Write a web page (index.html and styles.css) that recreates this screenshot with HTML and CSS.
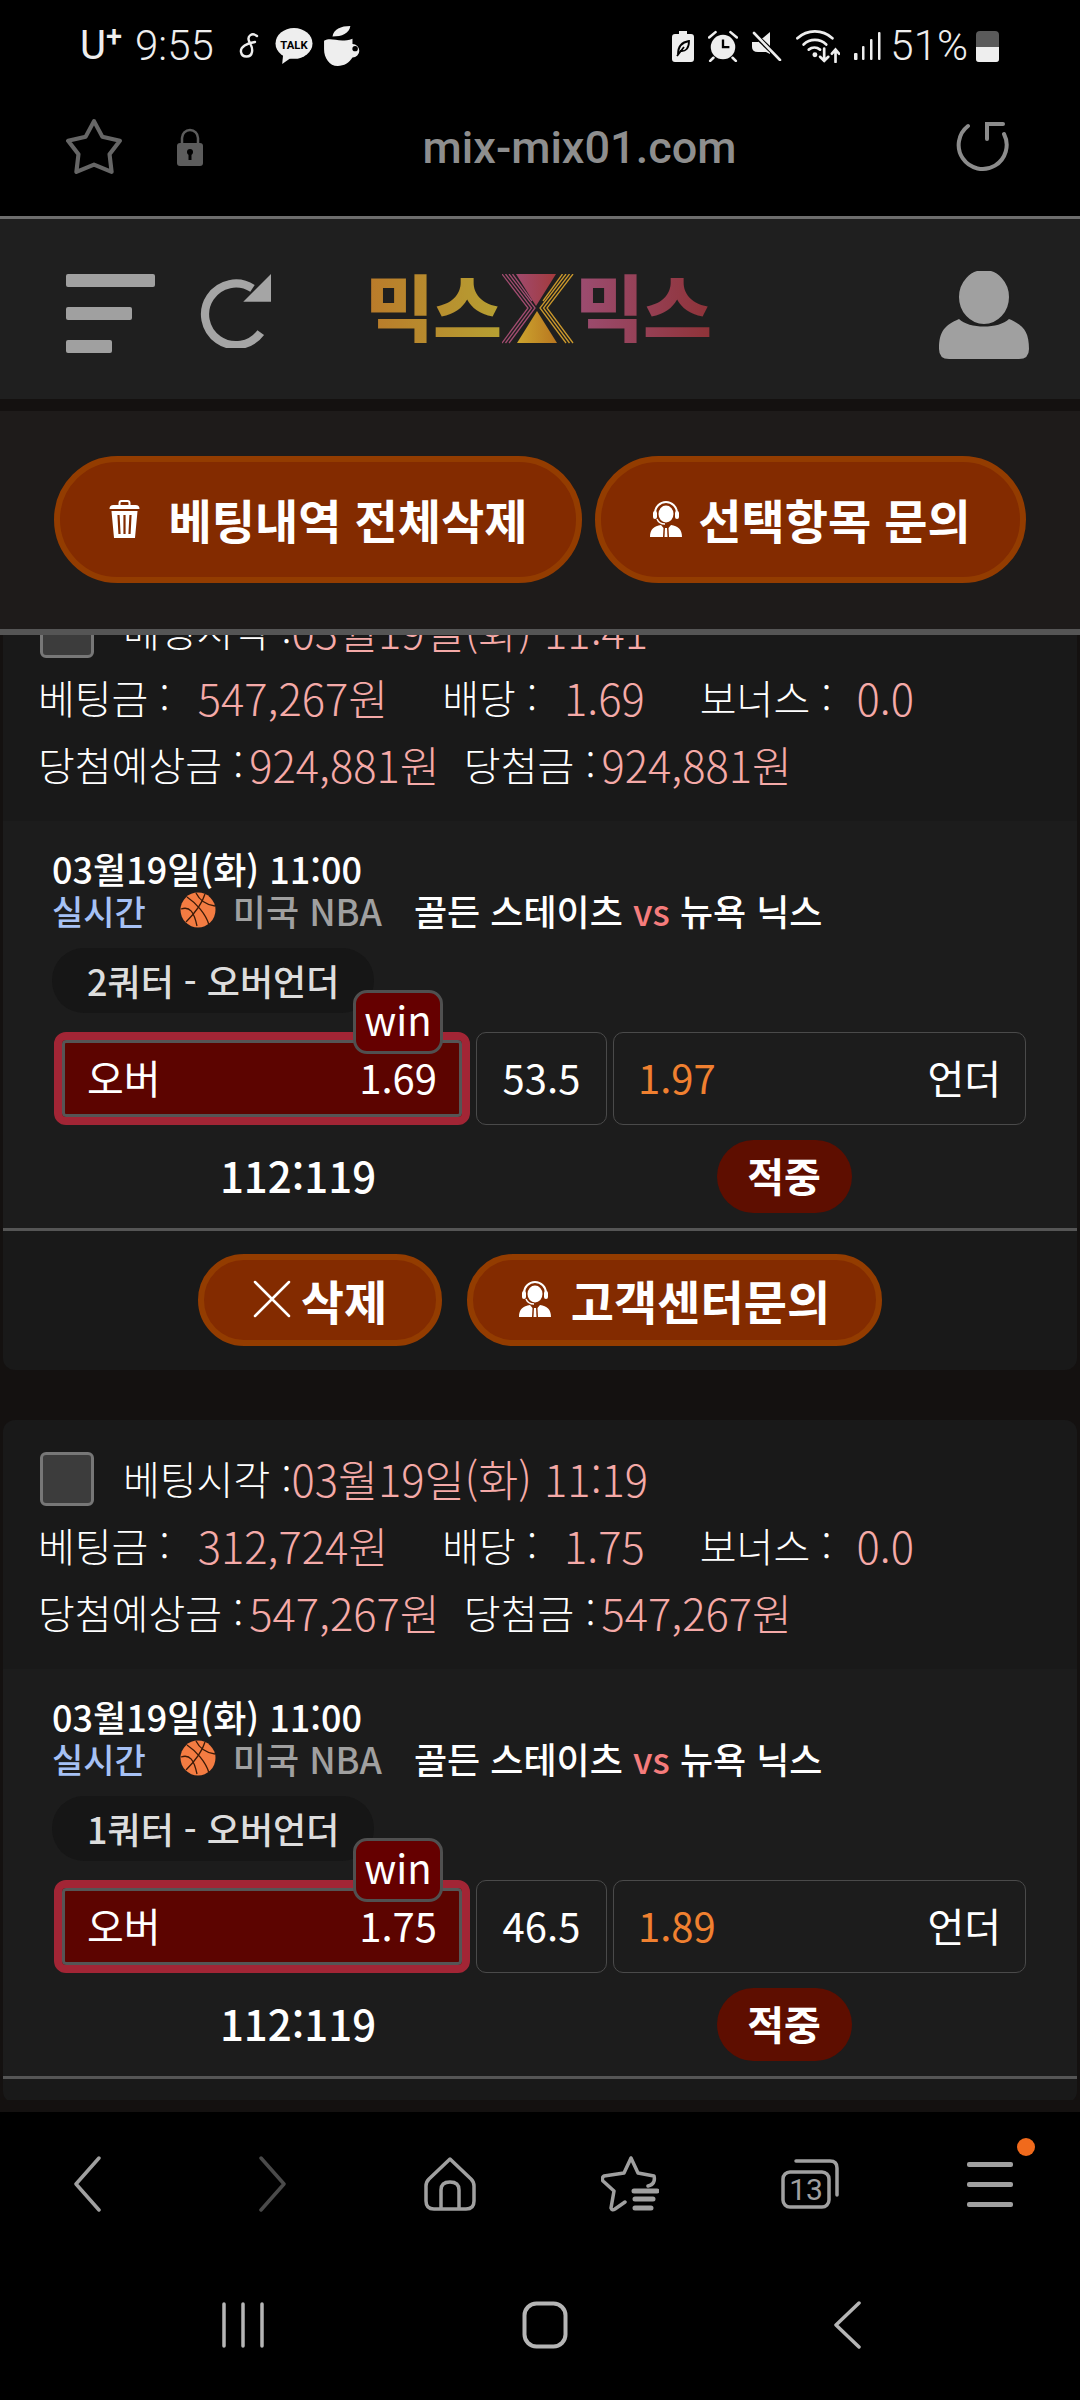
FILE: index.html
```html
<!DOCTYPE html>
<html lang="ko">
<head>
<meta charset="UTF-8" />
<meta name="viewport" content="width=device-width, initial-scale=1" />
<title>mix-mix01.com</title>
<link rel="stylesheet" href="styles.css">
</head>
<body>

<svg class="defs" width="0" height="0">
  <symbol id="agent" viewBox="0 0 32 36">
    <path d="M5 15 V12 A11 11 0 0 1 27 12 V15" fill="none" stroke="currentColor" stroke-width="2"/>
    <rect x="3" y="10" width="4" height="8" rx="2" fill="currentColor"/>
    <rect x="25" y="10" width="4" height="8" rx="2" fill="currentColor"/>
    <ellipse cx="16" cy="13" rx="7.500" ry="8.500" fill="currentColor"/>
    <path d="M7 18 Q9 23 15 23" fill="none" stroke="currentColor" stroke-width="1.500"/>
    <path d="M0 36 C0 28 4 25 11 24 L13.500 27 L13 36 Z M32 36 C32 28 28 25 21 24 L18.500 27 L19 36 Z" fill="currentColor"/>
    <path d="M15 27 H17 L17.500 36 H14.500 Z" fill="currentColor"/>
  </symbol>
  <symbol id="ball" viewBox="0 0 36 36">
    <circle cx="18" cy="18" r="17.500" fill="#f47c42"/>
    <g fill="none" stroke="#3a1a08" stroke-width="1.300">
      <path d="M7 5 C16 11 26 22 29 33"/>
      <path d="M25 2 C22 12 12 24 6 30"/>
      <path d="M1 17 C10 14 14 20 17 34"/>
      <path d="M16 1 C20 9 27 13 35 14"/>
    </g>
  </symbol>
</svg>

<div class="status-bar">
  <div class="status-left">
    <span class="carrier">U<sup>+</sup></span>
    <span class="clock">9:55</span>
    <svg class="st-s" width="20" height="26" viewBox="0 0 20 26"><path d="M18 3 C13 -1 8 3 10 8 C12 13 14 14 13 19 C12 25 3 25 2 19 C1 14 8 10 16 9" fill="none" stroke="#eee" stroke-width="2.400" stroke-linecap="round"/></svg>
    <svg class="st-talk" width="38" height="37" viewBox="0 0 37 36"><ellipse cx="18.500" cy="15" rx="18" ry="15" fill="#eee"/><path d="M8 25 L7 35 L17 28 Z" fill="#eee"/><text x="18.500" y="20" text-anchor="middle" class="talk-text">TALK</text></svg>
    <svg class="st-cup" width="38" height="40" viewBox="0 0 36 38"><path d="M8 10 C9 3 16 0 25 0 C24 7 17 10 8 10 Z" fill="#eee"/><path d="M0 14 C8 10 14 17 27 12 V17 A6.500 6.500 0 0 1 27 30 C24 35 19 38 13 38 C5 38 0 30 0 22 Z" fill="#eee"/><circle cx="29.500" cy="21.500" r="2.600" fill="#000"/></svg>
  </div>
  <div class="status-right">
    <svg width="22" height="31" viewBox="0 0 22 31"><path d="M7 0 H15 V3 H19 Q22 3 22 6 V28 Q22 31 19 31 H3 Q0 31 0 28 V6 Q0 3 3 3 H7 Z" fill="#eee"/><path d="M6 23 C6 14 11 11 17 10 C17 17 14 21 8 20 M5 25 L12 16" fill="none" stroke="#000" stroke-width="1.800"/></svg>
    <svg width="30" height="32" viewBox="0 0 28 30"><circle cx="14" cy="16" r="11.500" fill="#eee"/><path d="M14 9 V16 H20" fill="none" stroke="#000" stroke-width="2.200"/><path d="M1 7 L7 2 M27 7 L21 2 M5 26 L2 29 M23 26 L26 29" stroke="#eee" stroke-width="2.400" stroke-linecap="round"/></svg>
    <svg width="30" height="30" viewBox="0 0 30 30"><path d="M0 11 H6 L18 1 V23 L14 21 H6 Q0 21 0 16 Z" fill="#eee"/><path d="M2 3 L29 29" stroke="#000" stroke-width="5"/><path d="M2 2 L28 29" stroke="#eee" stroke-width="2.600" stroke-linecap="round"/></svg>
    <svg width="44" height="34" viewBox="0 0 42 33"><g fill="none" stroke="#eee" stroke-width="2.600" stroke-linecap="round"><path d="M1 9 A25 25 0 0 1 35 9"/><path d="M7 15 A16 16 0 0 1 29 15"/><path d="M12 20 A9 9 0 0 1 23 20"/><path d="M27 19 V31 M23 27 L27 31 L31 27"/><path d="M38 32 V20 M34.500 24 L38 20 L41.500 24"/></g><circle cx="18" cy="25" r="2.400" fill="#eee"/></svg>
    <svg class="st-signal" width="27" height="30" viewBox="0 0 27 30"><g fill="#eee"><rect x="0" y="22" width="3.500" height="7" rx="1"/><rect x="8" y="15" width="2.500" height="14" rx="1"/><rect x="16" y="8" width="2.500" height="21" rx="1"/><rect x="24" y="1" width="2.500" height="28" rx="1"/></g></svg>
    <span class="batt-pct">51%</span>
    <span class="batt"><span class="batt-fill"></span></span>
  </div>
</div>

<div class="url-bar">
  <svg class="url-star" width="56" height="58" viewBox="0 0 54 56"><path d="M27 3 L35 18 L52 22 L42 35 L44 52 L27 45 L10 52 L12 35 L2 22 L19 18 Z" fill="none" stroke="#666" stroke-width="4" stroke-linejoin="round"/></svg>
  <svg class="url-lock" width="26" height="38" viewBox="0 0 26 38"><path d="M5 18 V10 A8 8 0 0 1 21 10 V18" fill="none" stroke="#5c5c5c" stroke-width="2.500"/><rect x="0" y="15" width="26" height="23" rx="3" fill="#5c5c5c"/><circle cx="13" cy="24" r="3" fill="#000"/><rect x="11.500" y="25" width="3" height="7" fill="#000"/></svg>
  <div class="url-text">mix-mix01.com</div>
  <svg class="url-reload" width="54" height="54" viewBox="0 0 54 54"><path d="M12 6 A24 24 0 1 0 48 14" fill="none" stroke="#8c8c8c" stroke-width="4" stroke-linecap="round"/><path d="M31 19 V4 H47" fill="none" stroke="#8c8c8c" stroke-width="4" stroke-linecap="round"/></svg>
</div>

<header class="site-head">
  <div class="menu-bars">
    <span class="bar bar-lg"></span>
    <span class="bar bar-md"></span>
    <span class="bar bar-sm"></span>
  </div>
  <svg class="head-refresh" width="74" height="74" viewBox="0 0 72 72"><path d="M54 14 A30 30 0 1 0 62 57" fill="none" stroke="#a5a5a5" stroke-width="8"/><path d="M72 0 V27 H45 Z" fill="#a5a5a5"/></svg>
  <div class="logo">
    <span class="logo-word logo-gold">믹스</span>
    <svg class="logo-x" width="72" height="70" viewBox="0 0 72 70">
      <defs>
        <linearGradient id="xTop"><stop offset="0" stop-color="#a04a6e"/><stop offset="1" stop-color="#a33a3c"/></linearGradient>
        <linearGradient id="xBot"><stop offset="0" stop-color="#cda52e"/><stop offset="1" stop-color="#b8761f"/></linearGradient>
      </defs>
      <path d="M14 0 H54 L34 32 Z" fill="url(#xTop)"/>
      <path d="M15 69 H55 L35 37 Z" fill="url(#xBot)"/>
      <g fill="none" stroke="#a24c70" stroke-width="1.300">
        <path d="M0 0 L26 34 L0 69"/><path d="M3.500 0 L29.500 34 L3.500 69"/><path d="M7 0 L33 34 L7 69"/><path d="M10.500 0 L30 27"/>
      </g>
      <g fill="none" stroke="#c9972c" stroke-width="1.300">
        <path d="M71 0 L45 34 L71 69"/><path d="M67.500 0 L41.500 34 L67.500 69"/><path d="M64 0 L38 34 L64 69"/><path d="M60.500 0 L41 27"/>
      </g>
    </svg>
    <span class="logo-word logo-red">믹스</span>
  </div>
  <svg class="head-user" width="90" height="88" viewBox="0 0 90 88"><path d="M0 78 C0 60 6 54 20 48 C30 58 60 58 70 48 C84 54 90 60 90 78 Q90 88 80 88 H10 Q0 88 0 78 Z" fill="#a0a0a0"/><ellipse cx="45" cy="26" rx="26" ry="28" fill="#a0a0a0" stroke="#1f1f1f" stroke-width="2"/></svg>
</header>
<div class="strip"></div>

<div class="toolbar">
  <button class="pill-btn btn-clear">
    <svg class="trash" width="33" height="38" viewBox="0 0 32 38"><path d="M11 5 V3 Q11 1 13 1 H19 Q21 1 21 3 V5" fill="none" stroke="#fff" stroke-width="2"/><path d="M1 9 Q1 5 5 5 H27 Q31 5 31 9 Z" fill="#fff"/><path d="M3 11 H29 L26.500 38 H5.500 Z" fill="#fff"/><path d="M10 15 L11 34 M16 15 V34 M22 15 L21 34" stroke="#832b00" stroke-width="2.200"/></svg>
    베팅내역 전체삭제
  </button>
  <button class="pill-btn btn-ask">
    <svg class="agent" width="32" height="36"><use href="#agent"/></svg>
    선택항목 문의
  </button>
</div>

<main class="bet-list">
  <div class="bet-scroll">

    <section class="bet-card">
      <div class="info">
        <div class="info-row"><span class="check"></span>베팅시각 :<span class="val">03월19일(화) 11:41</span></div>
        <div class="info-row info-money"><span class="k k-bet">베팅금 :</span><span class="val v-bet">547,267원</span><span class="k k-odd">배당 :</span><span class="val v-odd">1.69</span><span class="k k-bonus">보너스 :</span><span class="val v-bonus">0.0</span></div>
        <div class="info-row info-sum">당첨예상금 :<span class="val">924,881원</span><span class="k-win">당첨금 :</span><span class="val">924,881원</span></div>
      </div>
      <div class="game">
        <div class="game-date">03월19일(화) 11:00</div>
        <div class="game-line">
          <span class="live">실시간</span>
          <svg class="ball" width="36" height="36"><use href="#ball"/></svg>
          <span class="league">미국 NBA</span>
          <span class="teams">골든 스테이츠 <span class="vs">vs</span> 뉴욕 닉스</span>
        </div>
        <div class="market">2쿼터 - 오버언더</div>
        <div class="odds">
          <div class="odd odd-on"><span>오버</span><span>1.69</span><span class="win-tag">win</span></div>
          <div class="odd odd-mid">53.5</div>
          <div class="odd odd-off"><span class="orange">1.97</span><span>언더</span></div>
        </div>
        <div class="score-row">
          <div class="score">112:119</div>
          <div class="result-cell"><span class="hit">적중</span></div>
        </div>
      </div>
      <div class="divider"></div>
      <div class="card-actions">
        <button class="pill-btn btn-del"><svg class="x-icon" width="38" height="38" viewBox="0 0 38 38"><path d="M2 2 L36 36 M36 2 L2 36" stroke="#fff" stroke-width="2.500" stroke-linecap="round"/></svg>삭제</button>
        <button class="pill-btn btn-cs"><svg class="agent" width="32" height="36"><use href="#agent"/></svg>고객센터문의</button>
      </div>
    </section>

    <section class="bet-card">
      <div class="info">
        <div class="info-row"><span class="check"></span>베팅시각 :<span class="val">03월19일(화) 11:19</span></div>
        <div class="info-row info-money"><span class="k k-bet">베팅금 :</span><span class="val v-bet">312,724원</span><span class="k k-odd">배당 :</span><span class="val v-odd">1.75</span><span class="k k-bonus">보너스 :</span><span class="val v-bonus">0.0</span></div>
        <div class="info-row info-sum">당첨예상금 :<span class="val">547,267원</span><span class="k-win">당첨금 :</span><span class="val">547,267원</span></div>
      </div>
      <div class="game">
        <div class="game-date">03월19일(화) 11:00</div>
        <div class="game-line">
          <span class="live">실시간</span>
          <svg class="ball" width="36" height="36"><use href="#ball"/></svg>
          <span class="league">미국 NBA</span>
          <span class="teams">골든 스테이츠 <span class="vs">vs</span> 뉴욕 닉스</span>
        </div>
        <div class="market">1쿼터 - 오버언더</div>
        <div class="odds">
          <div class="odd odd-on"><span>오버</span><span>1.75</span><span class="win-tag">win</span></div>
          <div class="odd odd-mid">46.5</div>
          <div class="odd odd-off"><span class="orange">1.89</span><span>언더</span></div>
        </div>
        <div class="score-row">
          <div class="score">112:119</div>
          <div class="result-cell"><span class="hit">적중</span></div>
        </div>
      </div>
      <div class="divider"></div>
    </section>

  </div>
</main>
<div class="strip"></div>

<nav class="browser-nav">
  <svg class="nav-back" width="28" height="56" viewBox="0 0 28 56"><path d="M26 2 L3 28 L26 54" fill="none" stroke="#a0a0a0" stroke-width="3.500" stroke-linecap="round" stroke-linejoin="round"/></svg>
  <svg class="nav-next" width="28" height="56" viewBox="0 0 28 56"><path d="M2 2 L25 28 L2 54" fill="none" stroke="#4a4a4a" stroke-width="3.500" stroke-linecap="round" stroke-linejoin="round"/></svg>
  <svg width="52" height="54" viewBox="0 0 52 54"><path d="M26 2 L47 22 Q50 25 50 29 V44 Q50 52 42 52 H10 Q2 52 2 44 V29 Q2 25 5 22 Z" fill="none" stroke="#a0a0a0" stroke-width="3.500" stroke-linejoin="round"/><path d="M17 52 V33 Q17 25 26 25 Q35 25 35 33 V52" fill="none" stroke="#a0a0a0" stroke-width="3.500"/></svg>
  <svg width="58" height="56" viewBox="0 0 58 56"><path d="M30 2 L37 17 L53 20 Q55 28 47 30 M30 2 L23 17 L3 20 Q0 22 2 25 L13 35 L10 52 Q11 55 14 53 L24 46" fill="none" stroke="#a0a0a0" stroke-width="3.500" stroke-linejoin="round" stroke-linecap="round"/><path d="M33 35 H56 M34 43 H52 M34 52 H50" stroke="#a0a0a0" stroke-width="5" stroke-linecap="round"/></svg>
  <svg class="tabs-icon" width="58" height="50" viewBox="0 0 58 50"><path d="M15 2 H49 Q56 2 56 9 V36" fill="none" stroke="#a0a0a0" stroke-width="3.500" stroke-linecap="round"/><rect x="2" y="13" width="46" height="35" rx="7" fill="none" stroke="#a0a0a0" stroke-width="3.500"/><text x="25" y="41" text-anchor="middle" class="tabs-count">13</text></svg>
  <div class="nav-menu">
    <span class="nav-bar"></span><span class="nav-bar"></span><span class="nav-bar"></span>
    <span class="nav-dot"></span>
  </div>
</nav>

<nav class="system-nav">
  <svg width="42" height="46" viewBox="0 0 42 46"><path d="M2 2 V44 M21 2 V44 M40 2 V44" stroke="#b5b5b5" stroke-width="3.500" stroke-linecap="round"/></svg>
  <svg width="46" height="48" viewBox="0 0 46 48"><rect x="2.500" y="2.500" width="41" height="43" rx="12" fill="none" stroke="#b5b5b5" stroke-width="4"/></svg>
  <svg width="28" height="48" viewBox="0 0 28 48"><path d="M26 2 L3 24 L26 46" fill="none" stroke="#b5b5b5" stroke-width="3.500" stroke-linecap="round" stroke-linejoin="round"/></svg>
</nav>

</body>
</html>
```

FILE: styles.css
```css
* {
  box-sizing: border-box;
}
html, body {
  margin: 0;
  padding: 0;
  background: #000;
}
body {
  width: 1080px;
  height: 2400px;
  overflow: hidden;
  display: flex;
  flex-direction: column;
  font-family: "Noto Sans CJK KR", "Noto Sans", sans-serif;
  color: #fff;
}
.defs {
  position: absolute;
}
svg {
  display: block;
  flex: none;
}

/* Phone status bar */
.status-bar {
  height: 70px;
  padding: 22px 81px 0 80px;
  display: flex;
  justify-content: space-between;
  align-items: center;
  background: #000;
  font-family: Roboto, sans-serif;
  color: #eee;
}
.status-left, .status-right {
  display: flex;
  align-items: center;
}
.carrier {
  font-size: 40px;
  font-weight: 400;
  line-height: 48px;
}
.carrier sup {
  font-size: 29px;
  font-weight: 500;
  line-height: 0;
  vertical-align: 13px;
}
.clock {
  margin-left: 13px;
  font-size: 42px;
  font-weight: 300;
  line-height: 48px;
}
.st-s {
  margin-left: 25px;
}
.st-talk {
  margin-left: 16px;
}
.st-cup {
  margin-left: 11px;
}
.talk-text {
  font-family: Roboto, sans-serif;
  font-size: 11px;
  font-weight: 700;
  fill: #000;
}
.status-right {
  gap: 14px;
}
.st-signal {
  margin-right: -5px;
}
.batt-pct {
  font-size: 42px;
  font-weight: 300;
  line-height: 48px;
}
.batt {
  width: 23px;
  height: 31px;
  margin-left: -6px;
  display: flex;
  align-items: flex-end;
  background: #5a5a5a;
  border-radius: 4px 4px 3px 3px;
  overflow: hidden;
}
.batt-fill {
  width: 100%;
  height: 15px;
  background: #eee;
}

/* Browser address bar */
.url-bar {
  height: 146px;
  padding: 8px 70px 0 66px;
  display: flex;
  align-items: center;
  background: #000;
}
.url-lock {
  margin-left: 55px;
}
.url-text {
  flex: 1;
  text-align: center;
  font-family: Roboto, sans-serif;
  font-size: 45px;
  font-weight: 500;
  color: #8e8e8e;
}

/* Site header */
.site-head {
  height: 183px;
  padding: 0 51px 0 66px;
  display: flex;
  align-items: center;
  background: #1f1f1f;
  border-top: 3px solid #6e6e6e;
}
.menu-bars {
  width: 90px;
  margin-top: 8px;
  display: flex;
  flex-direction: column;
  gap: 20px;
}
.bar {
  height: 13px;
  background: #a0a0a0;
  border-radius: 2px;
}
.bar-lg { width: 89px; }
.bar-md { width: 66px; }
.bar-sm { width: 46px; }
.head-refresh {
  margin: 3px 0 0 41px;
}
.logo {
  margin-left: 94px;
  display: flex;
  align-items: center;
  gap: 1px;
}
.logo-word {
  width: 136px;
  margin-bottom: 6px;
  font-size: 75px;
  font-weight: 900;
  line-height: 74px;
  white-space: nowrap;
  letter-spacing: -1px;
  background-clip: text;
  -webkit-background-clip: text;
  color: transparent;
}
.logo-gold {
  background-image: linear-gradient(90deg, #ba7a2a, #b6a032);
}
.logo-red {
  background-image: linear-gradient(90deg, #9c4d72, #8f3338);
}
.head-user {
  margin: 12px 0 0 auto;
}
.strip {
  height: 12px;
  flex: none;
  background: #141110;
}

/* Buttons */
.toolbar {
  height: 218px;
  padding: 45px 54px 0;
  display: flex;
  gap: 13px;
  background: #1e1b1a;
}
.pill-btn {
  display: flex;
  align-items: center;
  justify-content: center;
  padding: 0 0 2px;
  font-family: inherit;
  font-weight: 700;
  font-size: 47px;
  color: #fff;
  background: #832b00;
  border: 6px solid #933c00;
  border-radius: 64px;
  white-space: nowrap;
}
.btn-clear {
  width: 528px;
  height: 127px;
  gap: 27px;
}
.btn-ask {
  width: 431px;
  height: 127px;
  gap: 16px;
}

/* Bet list */
.bet-list {
  height: 1471px;
  flex: none;
  overflow: hidden;
  background: #141110;
  border-top: 6px solid #555;
}
.bet-scroll {
  margin-top: -63px;
  display: flex;
  flex-direction: column;
  gap: 50px;
}
.bet-card {
  margin: 0 3px;
  padding: 25px 0 24px;
  background: #191919;
  border-radius: 12px;
}
.info {
  padding: 0 37px 23px;
  font-size: 40px;
  font-weight: 300;
  line-height: 67px;
  color: #fff;
}
.info-row {
  height: 67px;
  display: flex;
  align-items: center;
  white-space: nowrap;
}
.info-money, .info-sum {
  margin-left: -2px;
}
.check {
  width: 54px;
  height: 54px;
  margin-right: 29px;
  background: #3c3c3c;
  border: 3px solid #777;
  border-radius: 6px;
}
.val {
  font-size: 43.5px;
  color: #f5aaa8;
}
.info-sum .val {
  margin-left: 6px;
}
.v-bet { margin-left: 28px; }
.k-odd { margin-left: 54px; }
.v-odd { margin-left: 27px; }
.k-bonus { margin-left: 55px; }
.v-bonus { margin-left: 25px; }
.k-win { margin-left: 24px; }

.game {
  padding: 26px 51px 15px 49px;
  background: #1c1c1c;
}
.game-date {
  font-size: 36px;
  font-weight: 500;
  line-height: 42px;
}
.game-line {
  height: 42px;
  display: flex;
  align-items: center;
  font-size: 36px;
  font-weight: 500;
  white-space: nowrap;
}
.live {
  font-size: 34px;
  color: #a6c1f5;
}
.ball {
  margin-left: 34px;
}
.league {
  margin-left: 17px;
  color: #a0a0a0;
}
.teams {
  margin-left: 32px;
}
.vs {
  color: #f57c7c;
}
.market {
  width: 322px;
  height: 65px;
  margin-top: 17px;
  padding-left: 35px;
  font-size: 36px;
  font-weight: 500;
  line-height: 65px;
  color: #ddd;
  background: #161616;
  border-radius: 32px;
  white-space: nowrap;
}
.odds {
  height: 93px;
  margin: 19px 0 0 2px;
  display: grid;
  grid-template-columns: 416px 131px 1fr;
  gap: 6px;
  font-size: 40px;
  font-weight: 400;
}
.odd {
  display: flex;
  align-items: center;
  justify-content: space-between;
  border: 1px solid #4a4a4a;
  border-radius: 10px;
  padding: 0 24px 3px;
}
.odd-mid {
  justify-content: center;
  padding: 0 0 3px;
}
.odd-on {
  position: relative;
  padding: 0 25px 3px;
  background: #5c0400;
  border: 8px solid #a22535;
  border-radius: 12px;
  box-shadow: inset 0 0 0 3px #555;
}
.orange {
  color: #f08030;
}
.win-tag {
  position: absolute;
  top: -50px;
  right: 19px;
  width: 90px;
  height: 64px;
  text-align: center;
  font-size: 40px;
  line-height: 53px;
  background: #650000;
  border: 3px solid #505050;
  border-radius: 14px;
}
.score-row {
  height: 73px;
  margin: 15px 0 0 3px;
  display: grid;
  grid-template-columns: 486px 486px;
  align-items: center;
}
.score {
  padding-bottom: 5px;
  text-align: center;
  font-size: 42px;
  font-weight: 500;
}
.result-cell {
  display: flex;
  justify-content: center;
}
.hit {
  width: 135px;
  height: 73px;
  text-align: center;
  font-size: 40px;
  font-weight: 700;
  line-height: 71px;
  background: #5e0e00;
  border-radius: 37px;
}
.divider {
  height: 3px;
  background: #555;
}
.card-actions {
  margin-top: 23px;
  display: flex;
  justify-content: center;
  gap: 25px;
}
.btn-del {
  width: 244px;
  height: 92px;
  gap: 10px;
}
.btn-cs {
  width: 415px;
  height: 92px;
  gap: 20px;
}

/* Browser bottom nav */
.browser-nav {
  height: 144px;
  flex: none;
  display: grid;
  grid-template-columns: repeat(6, 180px);
  justify-items: center;
  align-items: center;
  background: #000;
}
.nav-back {
  margin-right: 6px;
}
.nav-next {
  margin-left: 6px;
}
.tabs-count {
  font-family: Roboto, sans-serif;
  font-size: 30px;
  fill: #a0a0a0;
}
.nav-menu {
  position: relative;
  width: 46px;
  display: flex;
  flex-direction: column;
  gap: 15px;
}
.nav-bar {
  height: 5px;
  background: #a0a0a0;
  border-radius: 2px;
}
.nav-dot {
  position: absolute;
  top: -24px;
  right: -22px;
  width: 18px;
  height: 18px;
  background: #f06a1c;
  border-radius: 50%;
}

/* System nav */
.system-nav {
  height: 144px;
  flex: none;
  padding: 0 0 6px 92px;
  display: grid;
  grid-template-columns: repeat(3, 302px);
  justify-items: center;
  align-items: center;
  background: #000;
}
```
